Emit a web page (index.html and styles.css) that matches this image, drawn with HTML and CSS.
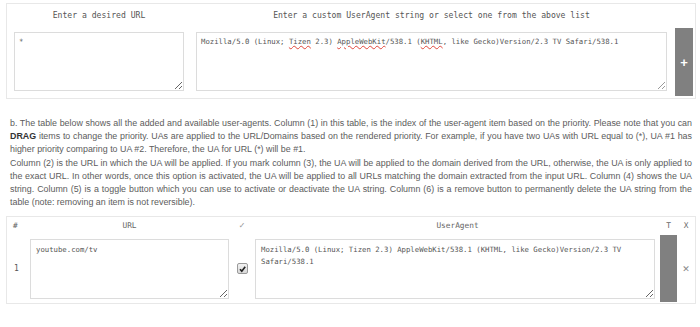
FILE: index.html
```html
<!DOCTYPE html>
<html lang="en">
<head>
    <meta charset="UTF-8">
    <meta name="viewport" content="width=device-width, initial-scale=1.0">
    <title>User-Agent Switcher Options</title>
    <link rel="stylesheet" href="styles.css">
</head>
<body>

    <div class="page">

        <!-- Add a new user-agent -->
        <div class="panel add-panel">
            <div class="label">Enter a desired URL</div>
            <div class="label">Enter a custom UserAgent string or select one from the above list</div>
            <div></div>
            <textarea class="field url-field" spellcheck="false">*</textarea>
            <div class="field fake-field">Mozilla/5.0 (Linux; <span class="typo">Tizen</span> 2.3) <span class="typo">AppleWebKit</span>/538.1 (<span class="typo">KHTML</span>, like Gecko)Version/2.3 TV Safari/538.1<span class="grip"><svg width="8" height="8" viewBox="0 0 8 8"><path d="M8 1L1 8M8 5L5 8" stroke="#9a9a9a" stroke-width="1" fill="none"/></svg></span></div>
            <button class="btn-add">+</button>
        </div>

        <p class="help">
            b. The table below shows all the added and available user-agents. Column (1) in this table, is the index of the user-agent item based on the priority. Please note that you can <b>DRAG</b> items to change the priority. UAs are applied to the URL/Domains based on the rendered priority. For example, if you have two UAs with URL equal to (*), UA #1 has higher priority comparing to UA #2. Therefore, the UA for URL (*) will be #1.<br>
            Column (2) is the URL in which the UA will be applied. If you mark column (3), the UA will be applied to the domain derived from the URL, otherwise, the UA is only applied to the exact URL. In other words, once this option is activated, the UA will be applied to all URLs matching the domain extracted from the input URL. Column (4) shows the UA string. Column (5) is a toggle button which you can use to activate or deactivate the UA string. Column (6) is a remove button to permanently delete the UA string from the table (note: removing an item is not reversible).
        </p>

        <!-- List of user-agents -->
        <div class="panel list-panel">
            <div class="th th-index">#</div>
            <div class="th">URL</div>
            <div class="th th-check">&#10003;</div>
            <div class="th">UserAgent</div>
            <div class="th">T</div>
            <div class="th">X</div>

            <div class="td td-index">1</div>
            <textarea class="field row-field" spellcheck="false">youtube.com/tv</textarea>
            <div class="td">
                <span class="check">
                    <svg width="10" height="10" viewBox="0 0 10 10"><path d="M2.2 5.2L4.2 7.4L8 2.4" stroke="#222" stroke-width="1.8" fill="none"/></svg>
                </span>
            </div>
            <textarea class="field row-field ua-field" spellcheck="false">Mozilla/5.0 (Linux; Tizen 2.3) AppleWebKit/538.1 (KHTML, like Gecko)Version/2.3 TV Safari/538.1</textarea>
            <div class="toggle"></div>
            <div class="td remove">&#10005;</div>
        </div>

    </div>

</body>
</html>
```

FILE: styles.css
```css
body {
    margin: 0;
    background: #ffffff;
    font-family: "Liberation Sans", Arial, sans-serif;
}

.page {
    padding: 3px 4px 0 6px;
}

.panel {
    border: 1px solid #e8e8e8;
}

/* top form */
.add-panel {
    display: grid;
    grid-template-columns: 170px 471px 1fr;
    grid-template-rows: 24px 68px;
    column-gap: 12px;
    padding: 0 0 2px 7px;
}

.label {
    font-family: "DejaVu Sans Mono", monospace;
    font-size: 8.1px;
    line-height: 22px;
    color: #555;
    text-align: center;
}

.field {
    box-sizing: border-box;
    margin: 4px 0 0 0;
    border: 1px solid #dcdcdc;
    border-radius: 0;
    background: #fff;
    font-family: "DejaVu Sans Mono", monospace;
    font-size: 7.3px;
    line-height: 12px;
    color: #555;
    outline: none;
}

.url-field,
.fake-field {
    width: 100%;
    height: 59px;
    padding: 3px 4px;
}

.fake-field {
    position: relative;
    white-space: pre-wrap;
}

.typo {
    text-decoration: underline wavy #e0463a;
    text-decoration-thickness: 1px;
    text-underline-offset: 1px;
}

.grip {
    position: absolute;
    right: 1px;
    bottom: 1px;
    width: 8px;
    height: 8px;
    line-height: 0;
}

.btn-add {
    justify-self: start;
    margin-left: -4px;
    width: 18px;
    height: 68px;
    padding: 0;
    border: none;
    background: #808080;
    color: #ffffff;
    font-family: "Liberation Sans", Arial, sans-serif;
    font-size: 13px;
    font-weight: bold;
    cursor: pointer;
}

/* help text */
.help {
    margin: 18px 4px 0 4px;
    font-size: 8.88px;
    line-height: 13.2px;
    color: #5c5c5c;
    text-align: justify;
}

.help b {
    color: #333;
}

/* table */
.list-panel {
    margin-top: 7px;
    display: grid;
    grid-template-columns: 23px 199px 26px 405px 17px 1fr;
    grid-template-rows: 18px 67px;
    padding: 0 0 1px 0;
}

.th {
    font-family: "DejaVu Sans Mono", monospace;
    font-size: 7.8px;
    line-height: 18px;
    color: #666;
    text-align: center;
}

.th-index,
.td-index {
    text-align: left;
    padding-left: 6px;
}

.th-check {
    font-family: "DejaVu Sans", sans-serif;
    color: #999;
}

.td {
    display: flex;
    align-items: center;
    justify-content: center;
    font-family: "DejaVu Sans Mono", monospace;
    font-size: 8px;
    color: #555;
}

.td-index {
    justify-content: flex-start;
    padding-left: 7px;
}

.row-field {
    width: 199px;
    height: 60px;
    padding: 4px 5px;
}

.ua-field {
    width: 400px;
}

.check {
    display: flex;
    align-items: center;
    justify-content: center;
    box-sizing: border-box;
    width: 11px;
    height: 11px;
    border: 1px solid #9a9a9a;
    border-radius: 2px;
    background: linear-gradient(#f2f2f2, #d8d8d8);
}

.toggle {
    background: #808080;
}

.remove {
    font-family: "DejaVu Sans", sans-serif;
    font-size: 9px;
    color: #888;
}
```
